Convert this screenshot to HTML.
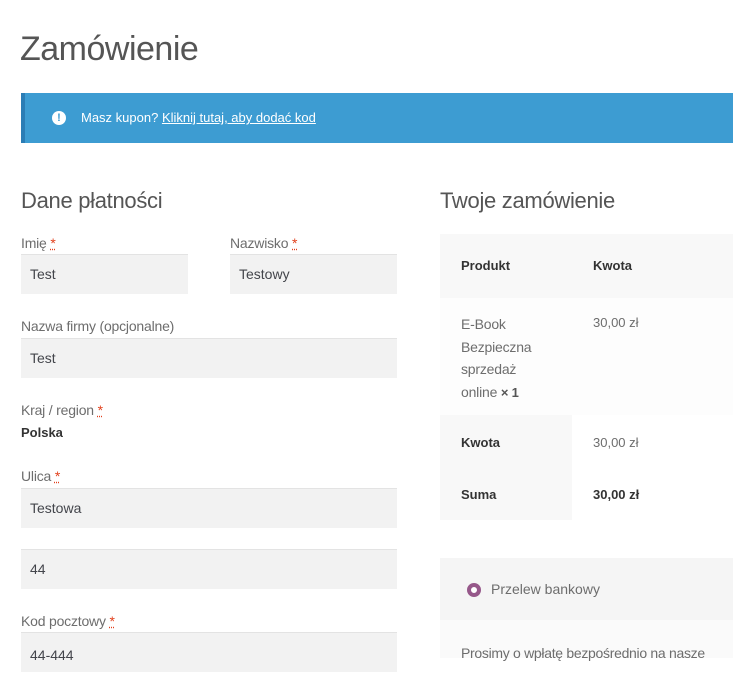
<!DOCTYPE html><html><head><meta charset="utf-8"><style>
body{margin:0;width:739px;height:658px;overflow:hidden;background:#fff;font-family:"Liberation Sans",sans-serif;color:#6d6d6d;position:relative}
div,span{position:absolute}
.t{white-space:nowrap}
.lbl{font-size:14px;color:#6d6d6d;letter-spacing:-0.2px}
.req{color:#e2401c;text-decoration:underline dotted}
.in{background:#f2f2f2;border-top:1px solid #e3e3e3;font-size:14px;color:#43454b;box-sizing:border-box;padding-left:9px;line-height:38px}
.b{font-weight:bold;color:#333;font-size:13px}
</style></head><body>
<div class="t" style="left:20px;top:30px;font-size:34px;color:#555;letter-spacing:-0.5px">Zamówienie</div>
<div style="left:21px;top:93px;width:712px;height:50px;background:#3d9cd2;border-left:4px solid #2b7db5;box-sizing:border-box"></div>
<div style="left:52px;top:111px;width:14px;height:14px;border-radius:50%;background:#fff;color:#3d9cd2;font-size:11px;font-weight:bold;text-align:center;line-height:14px">!</div>
<div class="t" style="left:81px;top:110px;font-size:13px;color:#fff">Masz kupon? <u>Kliknij tutaj, aby dodać kod</u></div>
<div class="t" style="left:21px;top:188px;font-size:22px;color:#555;letter-spacing:-0.3px">Dane płatności</div>
<div class="t lbl" style="left:21px;top:235px">Imię <span class="req" style="position:static">*</span></div>
<div class="in" style="left:21px;top:254px;width:167px;height:40px">Test</div>
<div class="t lbl" style="left:230px;top:235px">Nazwisko <span class="req" style="position:static">*</span></div>
<div class="in" style="left:230px;top:254px;width:167px;height:40px">Testowy</div>
<div class="t lbl" style="left:21px;top:318px">Nazwa firmy (opcjonalne)</div>
<div class="in" style="left:21px;top:338px;width:376px;height:40px">Test</div>
<div class="t lbl" style="left:21px;top:402px">Kraj / region <span class="req" style="position:static">*</span></div>
<div class="t b" style="left:21px;top:425px">Polska</div>
<div class="t lbl" style="left:21px;top:468px">Ulica <span class="req" style="position:static">*</span></div>
<div class="in" style="left:21px;top:488px;width:376px;height:40px">Testowa</div>
<div class="in" style="left:21px;top:549px;width:376px;height:40px">44</div>
<div class="t lbl" style="left:21px;top:613px">Kod pocztowy <span class="req" style="position:static">*</span></div>
<div class="in" style="left:21px;top:632px;width:376px;height:40px;line-height:44px">44-444</div>
<div class="t" style="left:440px;top:188px;font-size:22px;color:#555;letter-spacing:-0.3px">Twoje zamówienie</div>
<div style="left:440px;top:234px;width:293px;height:64px;background:#f8f8f8"></div>
<div class="t b" style="left:461px;top:258px">Produkt</div>
<div class="t b" style="left:593px;top:258px">Kwota</div>
<div style="left:440px;top:298px;width:293px;height:117px;background:#fdfdfd"></div>
<div style="left:461px;top:313px;font-size:14px;line-height:22.7px;color:#6d6d6d;letter-spacing:-0.2px">E-Book<br>Bezpieczna<br>sprzedaż<br>online <b style="color:#555;font-size:13px">× 1</b></div>
<div class="t" style="left:593px;top:315px;font-size:13px">30,00 zł</div>
<div style="left:440px;top:415px;width:132px;height:105px;background:#f8f8f8"></div>
<div class="t b" style="left:461px;top:435px">Kwota</div>
<div class="t" style="left:593px;top:435px;font-size:13px">30,00 zł</div>
<div class="t b" style="left:461px;top:487px">Suma</div>
<div class="t b" style="left:593px;top:487px">30,00 zł</div>
<div style="left:440px;top:558px;width:293px;height:62px;background:#f5f5f5"></div>
<div style="left:467px;top:583px;width:6px;height:6px;border:4px solid #96588a;border-radius:50%;background:#fff"></div>
<div class="t" style="left:491px;top:581px;font-size:14px">Przelew bankowy</div>
<div style="left:440px;top:620px;width:293px;height:38px;background:#fafafa"></div>
<div class="t" style="left:461px;top:645px;font-size:14px;letter-spacing:-0.3px">Prosimy o wpłatę bezpośrednio na nasze</div>
</body></html>
